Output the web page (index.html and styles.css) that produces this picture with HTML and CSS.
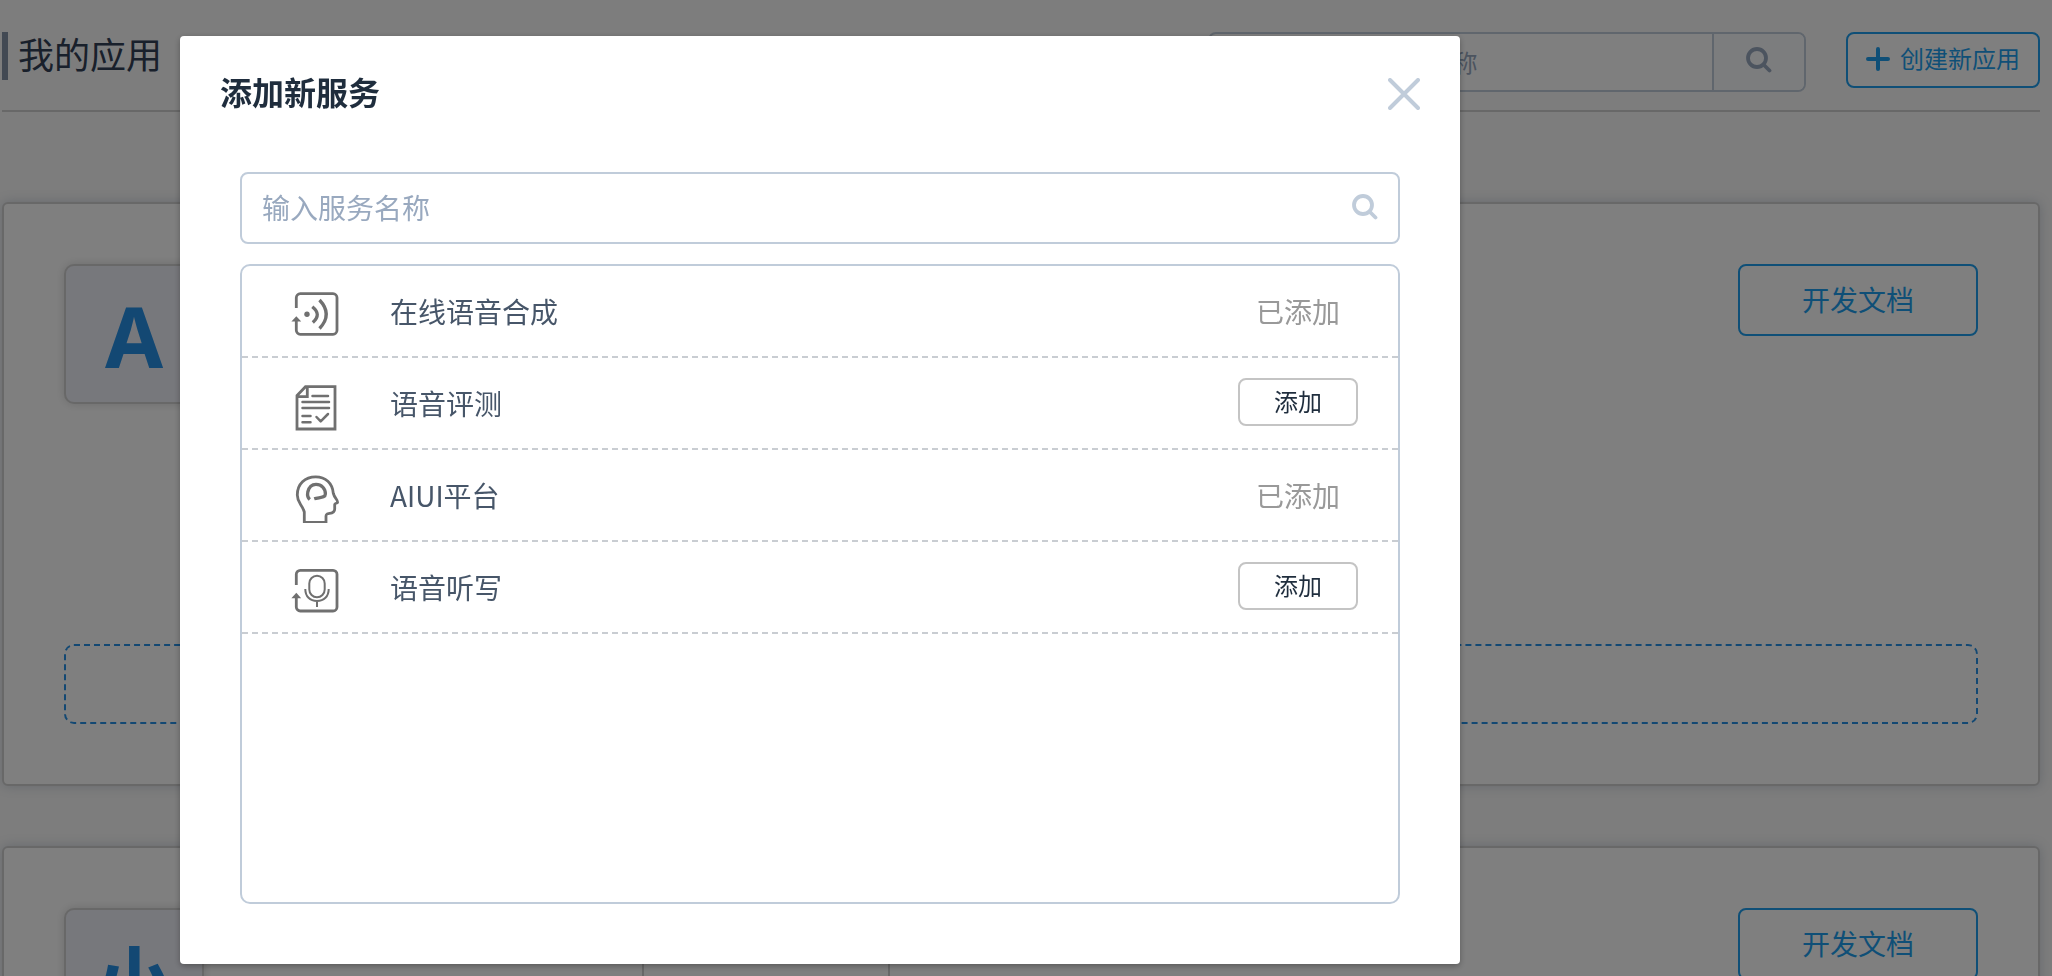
FILE: index.html
```html
<!DOCTYPE html>
<html lang="zh-CN">
<head>
<meta charset="utf-8">
<meta name="viewport" content="width=device-width, initial-scale=1">
<title>我的应用</title>
<link rel="stylesheet" href="styles.css">
</head>
<body>
<div class="page">
  <header class="page-header">
    <h1 class="page-title">我的应用</h1>
    <form class="app-search">
      <input class="app-search-input" type="text" placeholder="输入应用名称/服务名称" aria-label="搜索应用">
      <button class="app-search-button" type="button" aria-label="搜索">
        <svg class="search-icon" viewBox="0 0 26 26"><circle cx="11" cy="11" r="9"/><path d="M17.5 17.5L23.5 23.5"/></svg>
      </button>
    </form>
    <button class="create-button" type="button">
      <svg class="plus-icon" viewBox="0 0 24 24"><path d="M12 2V22M2 12H22"/></svg>
      <span class="create-label">创建新应用</span>
    </button>
  </header>
  <main class="cards">
    <section class="card">
      <div class="card-top">
        <div class="thumb">A</div>
        <button class="doc-button" type="button">开发文档</button>
      </div>
      <div class="add-zone"></div>
    </section>
    <section class="card">
      <div class="card-top">
        <div class="thumb thumb-han">小</div>
        <div class="card-stats"><div class="stat"></div></div>
        <button class="doc-button" type="button">开发文档</button>
      </div>
      <div class="add-zone"></div>
    </section>
  </main>
</div>

<div class="overlay">
  <div class="dialog" role="dialog" aria-modal="true" aria-labelledby="dialog-title">
    <div class="dialog-header">
      <h2 class="dialog-title" id="dialog-title">添加新服务</h2>
      <button class="close-button" type="button" aria-label="关闭">
        <svg class="close-icon" viewBox="0 0 32 32"><path d="M2 2L30 30M30 2L2 30"/></svg>
      </button>
    </div>
    <div class="dialog-body">
      <div class="service-search">
        <input class="service-search-input" type="text" placeholder="输入服务名称" aria-label="服务名称">
        <svg class="search-icon" viewBox="0 0 26 26"><circle cx="11" cy="11" r="9"/><path d="M17.5 17.5L23.5 23.5"/></svg>
      </div>
      <ul class="service-list">
        <li class="service">
          <svg class="service-icon" viewBox="0 0 50 56">
            <path d="M6.3 25V14.7a4 4 0 0 1 4-4H43a4 4 0 0 1 4 4V47.3a4 4 0 0 1-4 4H10.3a4 4 0 0 1-4-4V37"/>
            <path class="solid" d="M6.3 33.3L11.2 38.6H1.4Z"/>
            <circle class="solid" cx="17" cy="31.3" r="2.7"/>
            <path class="heavy" d="M22.3 23.7Q32 31.5 22.8 39.5"/>
            <path class="heavy" d="M29.5 17Q43 31.3 29.5 45.5"/>
          </svg>
          <span class="service-name">在线语音合成</span>
          <span class="service-state">已添加</span>
        </li>
        <li class="service">
          <svg class="service-icon" viewBox="0 0 50 56">
            <path d="M7 54V20.6L15.5 11.7H45V54ZM17.3 12V21.7H7"/>
            <path class="round" d="M22.5 21H38M12.5 27H39M12.5 33H39M12.5 41H20.5M12.5 47.3H20.5M26.5 42L30.7 46.3L38 39"/>
          </svg>
          <span class="service-name">语音评测</span>
          <button class="add-button" type="button">添加</button>
        </li>
        <li class="service">
          <svg class="service-icon" viewBox="0 0 50 56">
            <path d="M14.3 55.3V45C12 37 7.3 36 7.3 28C7.3 17 15 9.9 25.7 9.9C35.5 9.9 42.5 16 43.3 26.3C44.5 31 48.5 34 47.5 35.5C47 36.5 44.7 36 44.7 37.5V42C44.7 47.5 38.5 45.7 37 47C35.7 48 36 49 36 50V55.3Z"/>
            <path class="heavy" d="M19.8 32.5C17.5 30.5 17.2 28 17.8 25C19 20 22 17.4 26 17.4C31.5 17.4 35.4 21.5 35.4 27C35.4 31 29 30.2 24.2 31.8"/>
          </svg>
          <span class="service-name">AIUI平台</span>
          <span class="service-state">已添加</span>
        </li>
        <li class="service">
          <svg class="service-icon" viewBox="0 0 50 56">
            <path d="M6.3 26V15.3a4 4 0 0 1 4-4H43a4 4 0 0 1 4 4V48a4 4 0 0 1-4 4H10.3a4 4 0 0 1-4-4V38"/>
            <path class="solid" d="M6.3 33.8L11.2 39.2H1.4Z"/>
            <rect class="thin" x="19.3" y="16.7" width="15.4" height="21.6" rx="7.7"/>
            <path class="thin" d="M15.3 30C15.3 37.5 20 42 27 42S38.7 37.5 38.7 30M27 42V48"/>
          </svg>
          <span class="service-name">语音听写</span>
          <button class="add-button" type="button">添加</button>
        </li>
      </ul>
    </div>
  </div>
</div>
</body>
</html>
```
FILE: styles.css
```css
* {
  box-sizing: border-box;
}

body {
  margin: 0;
  height: 100vh;
  overflow: hidden;
  background: #fafafa;
  color: #1f2d3d;
  font-family: "Noto Sans CJK SC", sans-serif;
}

button,
input {
  font-family: inherit;
}

h1,
h2,
ul {
  margin: 0;
  padding: 0;
}

svg {
  flex: none;
  fill: none;
  stroke: currentColor;
}

.page {
  height: 100vh;
  padding: 32px 12px 0 2px;
  overflow: hidden;
}

.page-header {
  display: flex;
  align-items: flex-start;
  height: 80px;
  border-bottom: 2px solid #d1d1d1;
}

.page-title {
  height: 48px;
  margin-right: auto;
  padding-left: 10px;
  border-left: 6px solid #8492a6;
  color: #324057;
  font-size: 36px;
  font-weight: 400;
  line-height: 42px;
}

.app-search {
  display: flex;
  width: 598px;
  height: 60px;
  margin-right: 40px;
  border: 2px solid #c0ccda;
  border-radius: 8px;
  background: #fff;
  overflow: hidden;
}

.app-search-input {
  flex: 1;
  min-width: 0;
  padding: 0 18px 2px;
  border: 0;
  background: none;
  font-size: 24px;
}

.app-search-input::placeholder,
.service-search-input::placeholder {
  color: #99a9bf;
  opacity: 1;
}

.app-search-button {
  display: flex;
  align-items: center;
  justify-content: center;
  width: 92px;
  padding: 0 0 4px;
  border: 0;
  border-left: 2px solid #c0ccda;
  background: #f9fafc;
  color: #99a9bf;
}

.search-icon {
  width: 26px;
  height: 26px;
  stroke-width: 3.8;
  stroke-linecap: round;
}

.create-button {
  display: flex;
  align-items: center;
  justify-content: center;
  gap: 10px;
  width: 194px;
  height: 56px;
  padding: 0 0 2px;
  border: 2px solid #1e9fee;
  border-radius: 8px;
  background: #fff;
  color: #1e9fee;
  font-size: 24px;
}

.create-label {
  padding-bottom: 4px;
}

.plus-icon {
  width: 24px;
  height: 24px;
  stroke-width: 4;
  stroke-linecap: round;
}

.cards {
  display: flex;
  flex-direction: column;
  gap: 60px;
  padding-top: 90px;
}

.card {
  display: flex;
  flex-direction: column;
  justify-content: space-between;
  height: 584px;
  padding: 60px;
  border: 2px solid #d1d1d1;
  border-radius: 6px;
  background: #fff;
  box-shadow: 0 0 12px rgba(100, 120, 150, 0.3);
}

.card-top {
  display: flex;
  align-items: flex-start;
  justify-content: space-between;
}

.thumb {
  display: flex;
  align-items: center;
  justify-content: center;
  width: 140px;
  height: 140px;
  padding-top: 4px;
  border: 2px solid #d1d1d1;
  border-radius: 10px;
  background: #eff0f8;
  box-shadow: 0 0 10px rgba(0, 0, 0, 0.15);
  color: #2691e6;
  font-family: "Noto Sans", "Noto Sans CJK SC", sans-serif;
  font-size: 84px;
  font-weight: 700;
  line-height: 130px;
}

.thumb-han {
  padding-top: 0;
  font-family: "Noto Sans CJK SC", sans-serif;
  font-size: 80px;
}

.card-stats {
  flex: 1;
  padding-left: 438px;
}

.stat {
  width: 248px;
  height: 180px;
  border: solid #d1d1d1;
  border-width: 0 2px;
}

.doc-button {
  width: 240px;
  height: 72px;
  padding: 0 0 2px;
  border: 2px solid #1e9fee;
  border-radius: 8px;
  background: #fff;
  color: #1e9fee;
  font-size: 28px;
}

.add-zone {
  height: 80px;
  border: 2px dashed #2691e6;
  border-radius: 10px;
}

.overlay {
  position: fixed;
  inset: 0;
  padding: 36px 180px 12px;
  background: rgba(0, 0, 0, 0.5);
}

.dialog {
  display: flex;
  flex-direction: column;
  max-width: 1280px;
  height: 100%;
  border-radius: 4px;
  background: #fff;
  box-shadow: 0 2px 6px rgba(0, 0, 0, 0.3);
}

.dialog-header {
  display: flex;
  align-items: flex-end;
  justify-content: space-between;
  padding: 30px 40px 0;
}

.dialog-title {
  font-size: 32px;
  font-weight: 700;
  line-height: 50px;
}

.close-button {
  display: flex;
  padding: 0 0 6px;
  border: 0;
  background: none;
  color: #c0ccda;
}

.close-icon {
  width: 32px;
  height: 32px;
  stroke-width: 4;
  stroke-linecap: round;
}

.dialog-body {
  display: flex;
  flex: 1;
  flex-direction: column;
  gap: 20px;
  padding: 56px 60px 60px;
}

.service-search {
  display: flex;
  align-items: center;
  height: 72px;
  padding: 0 20px 2px;
  border: 2px solid #c0ccda;
  border-radius: 8px;
  color: #c0ccda;
}

.service-search-input {
  flex: 1;
  padding: 0;
  border: 0;
  background: none;
  font-size: 28px;
}

.service-list {
  flex: 1;
  border: 2px solid #c0ccda;
  border-radius: 10px;
  list-style: none;
}

.service {
  display: flex;
  align-items: center;
  height: 92px;
  padding: 0 40px 0 48px;
  border-bottom: 2px dashed #c9cdd2;
}

.service-icon {
  width: 50px;
  height: 56px;
  color: #707070;
  stroke-width: 2.8;
}

.service-icon .solid {
  fill: currentColor;
  stroke: none;
}

.service-icon .heavy {
  stroke-width: 3.3;
}

.service-icon .round {
  stroke-width: 2.5;
  stroke-linecap: round;
  stroke-linejoin: round;
}

.service-icon .thin {
  stroke-width: 2;
}

.service-name {
  flex: 1;
  padding-left: 50px;
  color: #475669;
  font-size: 28px;
}

.service-state {
  width: 120px;
  color: #999;
  font-size: 28px;
  text-align: center;
}

.add-button {
  width: 120px;
  height: 48px;
  margin-bottom: 2px;
  padding: 0 0 4px;
  border: 2px solid #c4c4c4;
  border-radius: 8px;
  background: #fff;
  color: #1f2d3d;
  font-size: 24px;
}
```
